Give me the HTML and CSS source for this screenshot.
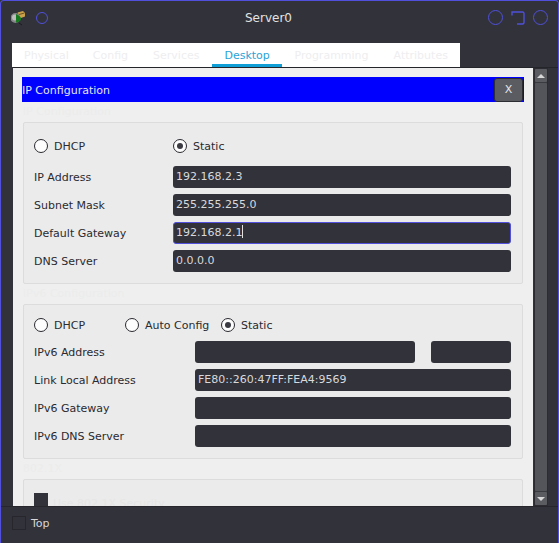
FILE: index.html
```html
<!DOCTYPE html>
<html lang="en">
<head>
<meta charset="utf-8">
<title>Server0</title>
<link rel="stylesheet" href="styles.css">
</head>
<body>
<div class="window">
  <header class="titlebar">
    <div class="title-left">
      <svg class="app-icon" width="16" height="16" viewBox="0 0 16 16">
        <circle cx="4.5" cy="8" r="5" fill="#85858a"/>
        <circle cx="4" cy="7.5" r="3" fill="#bdbdbd"/>
        <path d="M5 4 L10 7 L10 10 L6 13 L5 12 Z" fill="#157a1e"/>
        <path d="M6.5 2.5 L12 1 L14 3 L14 6.5 L10 8 L8 5 Z" fill="#c9a24a"/>
        <path d="M8 4.5 L13.5 3" stroke="#6f5420" stroke-width="1"/>
        <path d="M8 13 L11 15" stroke="#1c1c20" stroke-width="1"/>
      </svg>
      <span class="ring ring-small"></span>
    </div>
    <h1 class="title">Server0</h1>
    <div class="title-right">
      <span class="ring"></span>
      <svg class="restore" width="14" height="14" viewBox="0 0 14 14"><path d="M1 4.5 V1 H11.5 Q13 1 13 2.5 V11.5 Q13 13 11.5 13 H6" fill="none" stroke="#5050dc" stroke-width="1.4"/></svg>
      <span class="ring"></span>
    </div>
  </header>

  <nav class="tabs">
    <span class="tab tab-physical">Physical</span>
    <span class="tab tab-config">Config</span>
    <span class="tab tab-services">Services</span>
    <span class="tab tab-desktop">Desktop</span>
    <span class="tab tab-programming">Programming</span>
    <span class="tab tab-attributes">Attributes</span>
  </nav>

  <div class="body-row">
    <main class="pane">
      <div class="pane-header">
        <span>IP Configuration</span>
        <button class="close-btn">X</button>
      </div>

      <div class="legend">IP Configuration</div>
      <section class="group group-v4">
        <div class="radio-row">
          <label class="radio radio-v4-dhcp"><span class="dot"></span>DHCP</label>
          <label class="radio"><span class="dot on"></span>Static</label>
        </div>
        <div class="field"><span class="label">IP Address</span><div class="input">192.168.2.3</div></div>
        <div class="field"><span class="label">Subnet Mask</span><div class="input">255.255.255.0</div></div>
        <div class="field"><span class="label">Default Gateway</span><div class="input focus">192.168.2.1<i class="caret"></i></div></div>
        <div class="field"><span class="label">DNS Server</span><div class="input">0.0.0.0</div></div>
      </section>

      <div class="legend">IPv6 Configuration</div>
      <section class="group group-v6">
        <div class="radio-row radio-row-v6">
          <label class="radio radio-v6-dhcp"><span class="dot"></span>DHCP</label>
          <label class="radio radio-v6-auto"><span class="dot"></span>Auto Config</label>
          <label class="radio"><span class="dot on"></span>Static</label>
        </div>
        <div class="field field-v6"><span class="label">IPv6 Address</span><div class="input"></div><div class="input prefix"></div></div>
        <div class="field field-v6"><span class="label">Link Local Address</span><div class="input">FE80::260:47FF:FEA4:9569</div></div>
        <div class="field field-v6"><span class="label">IPv6 Gateway</span><div class="input"></div></div>
        <div class="field field-v6"><span class="label">IPv6 DNS Server</span><div class="input"></div></div>
      </section>

      <div class="legend">802.1X</div>
      <section class="group group-8021x">
        <div class="check-row"><span class="check-box"></span><span class="faint">Use 802.1X Security</span></div>
      </section>
    </main>

    <div class="scrollbar">
      <div class="sb-btn"><span class="arrow-up"></span></div>
      <div class="sb-track"></div>
      <div class="sb-btn"><span class="arrow-down"></span></div>
    </div>
  </div>

  <footer class="footer">
    <span class="top-box"></span>
    <span class="top-label">Top</span>
  </footer>
</div>
</body>
</html>
```

FILE: styles.css
```css
* { box-sizing: border-box; }
html, body { margin: 0; padding: 0; }
body {
  width: 559px;
  height: 543px;
  overflow: hidden;
  background: #31323a;
  font-family: "DejaVu Sans", sans-serif;
  font-size: 11px;
}
.window {
  width: 559px;
  height: 543px;
  display: flex;
  flex-direction: column;
  background: #31323a;
  border: 1px solid #5050dc;
  border-bottom: none;
  border-radius: 4px 4px 0 0;
  overflow: hidden;
}
.titlebar {
  height: 42px;
  flex: none;
  display: flex;
  align-items: center;
  justify-content: space-between;
  position: relative;
  padding: 0 10px 9px 10px;
}
.title-left { display: flex; align-items: center; gap: 9px; }
.title-right { display: flex; align-items: center; gap: 8px; }
.app-icon { display: block; }
.ring {
  display: block;
  width: 15px;
  height: 15px;
  border: 1.4px solid #5050dc;
  border-radius: 50%;
}
.ring-small { width: 12px; height: 12px; }
.restore { display: block; }
.title {
  position: absolute;
  left: 244px;
  top: 10px;
  margin: 0;
  font-size: 12px;
  line-height: 14px;
  font-weight: 400;
  color: #e3e3e3;
}
.tabs {
  flex: none;
  margin-left: 11px;
  width: 448px;
  height: 24px;
  background: #fff;
  display: flex;
  color: #eeeef0;
}
.tab { line-height: 25px; height: 24px; padding-left: 12px; }
.tab-config { margin-left: 11px; padding-left: 13px; }
.tab-services { margin-left: 12px; padding-left: 13px; }
.tab-desktop {
  margin-left: 13px;
  width: 70px;
  padding-left: 12px;
  color: #2ba3d6;
  border-bottom: 3px solid #0f9fd6;
}
.tab-programming { padding-left: 12px; }
.tab-attributes { padding-left: 25px; }
.body-row {
  flex: none;
  height: 439px;
  display: flex;
  margin-left: 12px;
  border-top: 1px solid #24242b;
}
.pane {
  width: 520px;
  height: 438px;
  background: #efefef;
  overflow: hidden;
  padding: 9px 9px 0;
}
.pane-header {
  height: 25px;
  background: #0000ff;
  color: #e6e6f2;
  display: flex;
  align-items: center;
  justify-content: space-between;
  padding: 2px 1px 0 0;
}
.close-btn {
  width: 29px;
  height: 24px;
  margin-top: -2px;
  padding: 0;
  background: #5b5c62;
  color: #e6e6e6;
  border: 1px solid #2c2c33;
  border-radius: 3px;
  font: 11px "DejaVu Sans", sans-serif;
}
.legend {
  height: 20px;
  line-height: 20px;
  color: #ececec;
  margin-left: 1px;
}
.group {
  margin-left: 1px;
  width: 500px;
  background: #ebebeb;
  border: 1px solid #dcdcdc;
  border-radius: 2px;
  padding: 0 11px 0 10px;
  color: #2a2a30;
}
.group-v4 { height: 162px; padding-top: 13px; }
.group-v6 { height: 155px; padding-top: 10px; }
.group-8021x { height: 60px; padding-top: 13px; }
.radio-row {
  display: flex;
  height: 20px;
  margin-bottom: 10px;
  align-items: center;
}
.radio-row-v6 { margin-bottom: 6px; }
.radio { display: flex; align-items: center; gap: 6px; }
.radio-v4-dhcp { width: 139px; }
.radio-v6-dhcp { width: 91px; }
.radio-v6-auto { width: 96px; }
.dot {
  width: 14px;
  height: 14px;
  border-radius: 50%;
  border: 1.5px solid #2a2a30;
  background: #fdfdfd;
  display: block;
  flex: none;
  position: relative;
}
.dot.on::after {
  content: "";
  position: absolute;
  left: 3px;
  top: 3px;
  width: 6px;
  height: 6px;
  border-radius: 50%;
  background: #3a3a42;
}
.field {
  display: flex;
  align-items: center;
  height: 22px;
  margin-bottom: 6px;
}
.label { width: 139px; flex: none; }
.input {
  flex: 1;
  height: 22px;
  line-height: 21px;
  background: #31323a;
  color: #d9d9dc;
  border-radius: 3px;
  padding-left: 3px;
  font-size: 11px;
  white-space: nowrap;
}
.input.focus { border: 1px solid #5050dc; line-height: 20px; padding-left: 2px; }
.caret {
  display: inline-block;
  width: 1px;
  height: 13px;
  background: #e0e0e0;
  vertical-align: -2px;
}
.field-v6 .label { width: 161px; }
.prefix { flex: none; width: 80px; margin-left: 16px; }
.check-row { display: flex; align-items: flex-start; gap: 5px; }
.check-box { width: 14px; height: 14px; background: #31323a; display: block; }
.faint { color: #e6e6e6; line-height: 18px; margin-top: 2px; }
.scrollbar {
  width: 14px;
  height: 438px;
  margin-left: 1px;
  background: #3a3b41;
  display: flex;
  flex-direction: column;
  gap: 1px;
  border: 1px solid #2b2b31;
}
.sb-btn {
  height: 13px;
  flex: none;
  background: #5b5c62;
  border-radius: 1px;
  display: flex;
  align-items: center;
  justify-content: center;
}
.sb-track { flex: 1; background: #54555b; border-radius: 1px; }
.arrow-up, .arrow-down {
  width: 0;
  height: 0;
  border-left: 4px solid transparent;
  border-right: 4px solid transparent;
}
.arrow-up { border-bottom: 4px solid #d8d8d8; }
.arrow-down { border-top: 4px solid #d8d8d8; }
.footer {
  flex: 1;
  display: flex;
  align-items: center;
  padding: 0 0 4px 11px;
  gap: 5px;
  border-top: 1px solid #26262c;
}
.top-box { width: 14px; height: 14px; border: 1px solid #26262c; display: block; }
.top-label { color: #d8d8d8; }
```
